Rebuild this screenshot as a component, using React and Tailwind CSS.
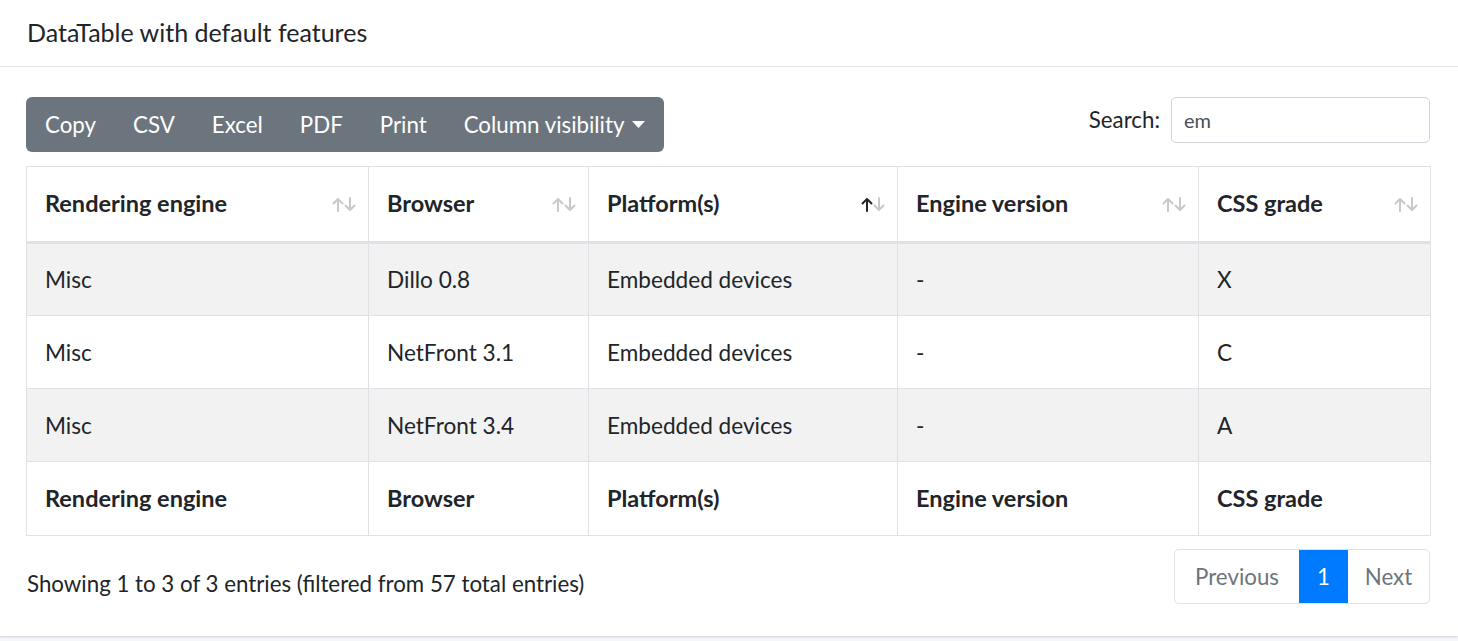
import React from 'react';

const FONT = { fontFamily: 'Lato, "Open Sans", sans-serif' };

const columns = [
  { name: 'Rendering engine', width: 'w-[342px]' },
  { name: 'Browser', width: 'w-[220px]' },
  { name: 'Platform(s)', width: 'w-[309px]', active: true },
  { name: 'Engine version', width: 'w-[301px]' },
  { name: 'CSS grade', width: 'w-[232px]' },
];

const rows = [
  ['Misc', 'Dillo 0.8', 'Embedded devices', '-', 'X'],
  ['Misc', 'NetFront 3.1', 'Embedded devices', '-', 'C'],
  ['Misc', 'NetFront 3.4', 'Embedded devices', '-', 'A'],
];

const buttons = ['Copy', 'CSV', 'Excel', 'PDF', 'Print'];

// Sort indicator: up + down arrows, the active column gets a dark up arrow
const SortIcon = ({ active }) => (
  <svg width="24" height="15" viewBox="0 0 24 15" className="shrink-0">
    <g fill="none" strokeWidth="2" strokeLinecap="round" strokeLinejoin="round">
      <path d="M6 14 V2 M1.5 6.5 L6 2 L10.5 6.5" stroke={active ? '#212529' : '#c8c8c8'} />
      <path d="M18 1 V13 M13.5 8.5 L18 13 L22.5 8.5" stroke="#c8c8c8" />
    </g>
  </svg>
);

const App = () => {
  return (
    <div className="min-h-[641px] bg-[#f4f6f9] text-[#212529]" style={FONT}>
      <div className="bg-white h-[636px] shadow-[0_1px_2px_rgba(0,0,0,0.15)]">
        {/* Header */}
        <div className="h-[67px] border-b border-[#e5e5e5] px-[27px] flex items-center">
          <h3 className="text-[25px] font-normal">DataTable with default features</h3>
        </div>

        {/* Body */}
        <div className="pl-[26px] pr-[28px] pt-[30px]">
          {/* Toolbar */}
          <div className="flex items-start justify-between">
            <div className="flex h-[55px] rounded-[6px] bg-[#6c757d] text-white text-[22.3px]">
              {buttons.map((b) => (
                <div key={b} className="flex items-center px-[18.5px] first:pl-[19px]">
                  {b}
                </div>
              ))}
              <div className="flex items-center pl-[18.5px] pr-[19px] gap-[8px]">
                Column visibility
                <svg width="13" height="8" viewBox="0 0 13 8">
                  <path d="M0 0 L13 0 L6.5 7 Z" fill="white" />
                </svg>
              </div>
            </div>

            <div className="flex items-center gap-[11px]">
              <span className="text-[22.3px]">Search:</span>
              <div className="w-[259px] h-[46px] border border-[#ced4da] rounded-[5px] flex items-center px-[12px] text-[20px] text-[#495057]">
                em
              </div>
            </div>
          </div>

          {/* Table */}
          <table className="mt-[14px] w-[1404px] border-collapse border border-[#dee2e6] text-[22.6px] table-fixed">
            <thead>
              <tr className="h-[76px] border-b-[3px] border-[#dee2e6]">
                {columns.map((c) => (
                  <th key={c.name} className={`${c.width} border-l border-[#dee2e6] text-left font-bold text-[23.5px] pl-[18px] pr-[12px]`}>
                    <div className="flex items-center justify-between">
                      <span>{c.name}</span>
                      <SortIcon active={c.active} />
                    </div>
                  </th>
                ))}
              </tr>
            </thead>
            <tbody>
              {rows.map((r, i) => (
                <tr key={i} className={`h-[73px] border-b border-[#dee2e6] ${i % 2 === 0 ? 'bg-[#f2f2f2]' : 'bg-white'}`}>
                  {r.map((cell, j) => (
                    <td key={j} className="border-l border-[#dee2e6] pl-[18px] pt-[1px]">
                      {cell}
                    </td>
                  ))}
                </tr>
              ))}
            </tbody>
            <tfoot>
              <tr className="h-[74px]">
                {columns.map((c) => (
                  <th key={c.name} className="border-l border-[#dee2e6] text-left font-bold text-[23.5px] pl-[18px]">
                    {c.name}
                  </th>
                ))}
              </tr>
            </tfoot>
          </table>

          {/* Footer: info + pagination */}
          <div className="flex items-start justify-between mt-[13px]">
            <div className="text-[22.3px] pt-[18px] pl-[1px]">
              Showing 1 to 3 of 3 entries (filtered from 57 total entries)
            </div>
            <div className="flex h-[55px] border border-[#dee2e6] rounded-[5px] text-[22.3px] overflow-hidden">
              <div className="w-[124px] flex items-center justify-center text-[#6c757d]">Previous</div>
              <div className="w-[49px] flex items-center justify-center bg-[#007bff] text-white">1</div>
              <div className="w-[81px] flex items-center justify-center text-[#6c757d]">Next</div>
            </div>
          </div>
        </div>
      </div>
    </div>
  );
};

export default App;
